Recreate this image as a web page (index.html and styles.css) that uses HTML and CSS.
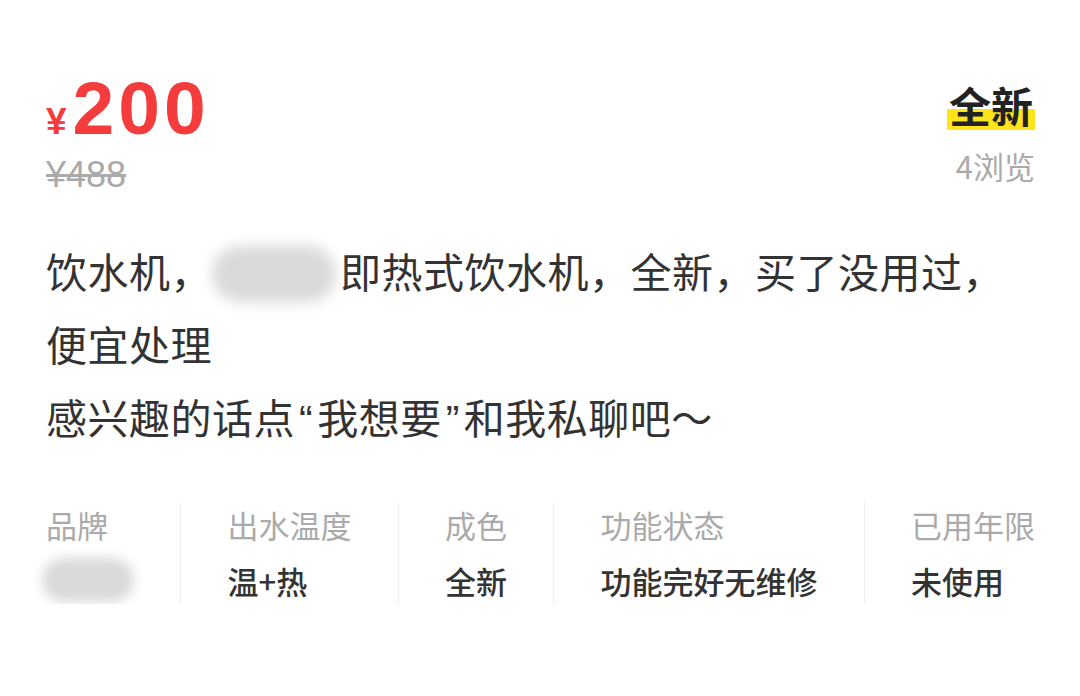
FILE: index.html
```html
<!DOCTYPE html>
<html lang="zh-CN">
<head>
    <meta charset="UTF-8">
    <meta name="viewport" content="width=device-width, initial-scale=1.0">
    <title>商品详情</title>
    <link rel="stylesheet" href="styles.css">
</head>
<body>
    <div class="item">
        <div class="head">
            <div class="price-box">
                <div class="price"><span class="yen">¥</span><span class="num">200</span></div>
                <div class="orig">¥488</div>
            </div>
            <div class="meta">
                <div class="cond"><span class="mark">全新</span></div>
                <div class="views">4浏览</div>
            </div>
        </div>

        <p class="desc">饮水机，<span class="blur"></span>即热式饮水机，全新，买了没用过，<br>便宜处理<br>感兴趣的话点<span class="q">“</span>我想要<span class="q">”</span>和我私聊吧～</p>

        <div class="attrs">
            <div class="attr">
                <div class="label">品牌</div>
                <div class="value"><span class="blur small"></span></div>
            </div>
            <div class="attr">
                <div class="label">出水温度</div>
                <div class="value">温+热</div>
            </div>
            <div class="attr">
                <div class="label">成色</div>
                <div class="value">全新</div>
            </div>
            <div class="attr">
                <div class="label">功能状态</div>
                <div class="value">功能完好无维修</div>
            </div>
            <div class="attr">
                <div class="label">已用年限</div>
                <div class="value">未使用</div>
            </div>
        </div>
    </div>
</body>
</html>
```

FILE: styles.css
```css
body {
    margin: 0;
    background-color: #fff;
    font-family: "Liberation Sans", "Noto Sans CJK SC", sans-serif;
    color: #333;
}

.item {
    padding: 70px 45px 0 46px;
}

.head {
    display: flex;
    justify-content: space-between;
    align-items: flex-start;
}

.price {
    color: #f43c3c;
    font-weight: bold;
    line-height: 76px;
}

.yen {
    font-size: 37px;
    margin-right: 6px;
}

.num {
    font-size: 75px;
    letter-spacing: 4px;
}

.orig {
    color: #aaa;
    font-size: 36px;
    line-height: 40px;
    text-decoration: line-through;
    margin-top: -12px;
}

.meta {
    text-align: right;
    padding-top: 10px;
}

.cond {
    font-family: "Noto Sans CJK SC", sans-serif;
    font-size: 42px;
    font-weight: bold;
    line-height: 50px;
    color: #222;
}

.mark {
    padding: 0 2px;
    background: linear-gradient(to bottom, transparent 58%, #ffe41a 58%, #ffe41a 92%, transparent 92%);
}

.views {
    font-family: "Noto Sans CJK SC", sans-serif;
    font-size: 31px;
    line-height: 40px;
    color: #aaa;
    margin-top: 16px;
}

.desc {
    font-family: "Liberation Sans", "Noto Sans CJK SC", sans-serif;
    font-size: 41px;
    letter-spacing: 0.5px;
    line-height: 73px;
    color: #333;
    margin: 43px 0 0;
}

.q {
    margin: 0 4px;
}

.blur {
    display: inline-block;
    width: 124px;
    height: 56px;
    margin: 0 4px 0 0;
    vertical-align: -14px;
    border-radius: 28px;
    background-color: #d9d9d9;
    filter: blur(7px);
}

.blur.small {
    width: 92px;
    height: 44px;
    margin: 0 0 0 -4px;
    vertical-align: -8px;
    border-radius: 22px;
    filter: blur(6px);
}

.attrs {
    display: flex;
    justify-content: space-between;
    margin-top: 45px;
    font-family: "Noto Sans CJK SC", sans-serif;
    white-space: nowrap;
}

.attr {
    flex-shrink: 0;
    padding-right: 46px;
    border-right: 1px solid #eee;
}

.attr + .attr {
    padding-left: 46px;
}

.attr:last-child {
    padding-right: 0;
    border-right: none;
}

.label {
    font-size: 31px;
    line-height: 46px;
    color: #aaa;
}

.value {
    font-size: 31px;
    font-weight: 500;
    line-height: 46px;
    color: #333;
    margin-top: 10px;
}
```
